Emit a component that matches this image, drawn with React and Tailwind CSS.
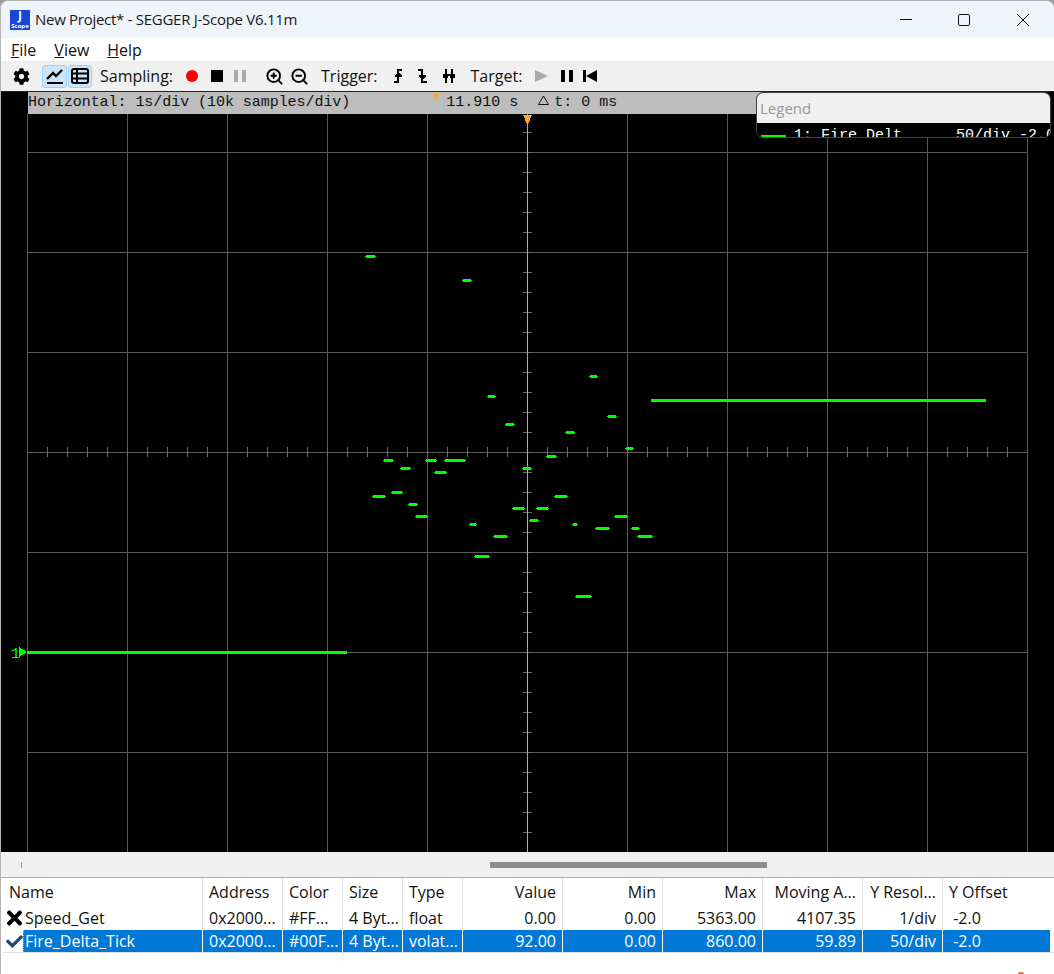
import React from 'react';
import { ZoomIn, ZoomOut } from 'lucide-react';
import { FaCog, FaTimes, FaCheck } from 'react-icons/fa';

const uiFont = "font-['Open_Sans','Noto_Sans',sans-serif]";
const monoFont = "font-['Liberation_Mono',monospace]";

const scatter = [
  [366, 375, 256], [463, 471, 280], [590, 597, 376], [488, 495, 396], [608, 616, 416],
  [506, 514, 424], [566, 574, 432], [626, 633, 448], [547, 556, 456], [384, 393, 460],
  [426, 436, 460], [445, 465, 460], [401, 410, 468], [523, 531, 468], [435, 446, 472],
  [373, 385, 496], [392, 402, 492], [555, 567, 496], [409, 417, 504], [513, 524, 508],
  [537, 548, 508], [416, 427, 516], [615, 627, 516], [470, 476, 524], [573, 577, 524],
  [530, 538, 520], [596, 609, 528], [632, 639, 528], [494, 507, 536], [638, 652, 536],
  [475, 489, 556], [576, 591, 596],
];

const columns = [
  { name: 'Name' },
  { name: 'Address' },
  { name: 'Color' },
  { name: 'Size' },
  { name: 'Type' },
  { name: 'Value', right: true },
  { name: 'Min', right: true },
  { name: 'Max', right: true },
  { name: 'Moving A...', right: true },
  { name: 'Y Resol...', right: true },
  { name: 'Y Offset' },
];

const rows = [
  { icon: 'x', cells: ['Speed_Get', '0x2000...', '#FF...', '4 Byt...', 'float', '0.00', '0.00', '5363.00', '4107.35', '1/div', ' -2.0'] },
  { icon: 'check', selected: true, cells: ['Fire_Delta_Tick', '0x2000...', '#00F...', '4 Byt...', 'volat...', '92.00', '0.00', '860.00', '59.89', '50/div', ' -2.0'] },
];

const gridCols = 'grid grid-cols-[200px_80px_60px_60px_60px_100px_100px_100px_100px_80px_107px]';

const Chart = () => {
  const hLines = [152, 252, 352, 452, 552, 652, 752];
  const vLines = [27, 127, 227, 327, 427, 627, 727, 827, 927, 1027];
  const xTicks = [];
  for (let x = 47; x <= 1007; x += 20) xTicks.push(x);
  const yTicks = [];
  for (let y = 132; y <= 832; y += 20) yTicks.push(y);

  return (
    <svg width="1053" height="738" viewBox="1 114 1053 738" className="block" shapeRendering="crispEdges">
      {hLines.map((y) => <rect key={y} x="27" y={y} width="1001" height="1" fill="#5a5a5a" />)}
      {vLines.map((x) => <rect key={x} x={x} y="114" width="1" height="738" fill="#5a5a5a" />)}
      {xTicks.map((x) => <rect key={x} x={x} y="447" width="1" height="10" fill="#6a6a6a" />)}
      {yTicks.map((y) => <rect key={y} x="523" y={y} width="9" height="1" fill="#6a6a6a" />)}
      <rect x="527" y="114" width="1" height="738" fill="#f0a41f" />
      <polygon points="523,115 532,115 528,124 527,124" fill="#ffa81f" />
      {scatter.map(([a, b, y], i) => (
        <g key={i}>
          <rect x={a} y={y - 1} width={b - a} height="3" fill="#00ff00" />
          <rect x={a - 1} y={y} width={b - a + 2} height="1" fill="#00ff00" />
        </g>
      ))}
      <rect x="651" y="399" width="335" height="3" fill="#00ff00" />
      <rect x="27" y="651" width="320" height="3" fill="#00ff00" />
      <polygon points="19,647 27,652 19,657" fill="#00ff00" />
      <text x="11" y="658" fill="#00ff00" fontSize="15" fontFamily="'Liberation Mono', monospace">1</text>
    </svg>
  );
};

const ChartIcon = () => (
  <svg width="18" height="16" viewBox="0 0 18 16">
    <path d="M1 15h16" stroke="#000" strokeWidth="2" />
    <path d="M1 11 L7 5 L10 8 L16 2" stroke="#000" strokeWidth="2.4" fill="none" />
  </svg>
);

const TableIcon = () => (
  <svg width="18" height="16" viewBox="0 0 18 16">
    <rect x="1" y="1" width="16" height="14" rx="2" fill="none" stroke="#000" strokeWidth="2" />
    <path d="M1 5.5h16M1 10.5h16M6 1v14" stroke="#000" strokeWidth="2" />
  </svg>
);

const TriggerIcon = ({ kind }) => (
  <svg width="14" height="16" viewBox="0 0 14 16" shapeRendering="crispEdges">
    {kind === 'rise' && <path d="M2 14h4V2h4M3 8h7M4 7h5M5 6h3" stroke="#000" strokeWidth="2" fill="none" />}
    {kind === 'fall' && <path d="M2 2h4v12h5M3 8h7M4 9h5M5 10h3" stroke="#000" strokeWidth="2" fill="none" />}
    {kind === 'both' && <path d="M4 1v14M10 1v14M1 7h12M1 9h5M8 9h5" stroke="#000" strokeWidth="2" fill="none" />}
  </svg>
);

const App = () => {
  return (
    <div className={`w-[1054px] h-[974px] bg-[#9a9a9a] overflow-hidden ${uiFont}`}>
      <div className="h-full flex flex-col relative bg-white rounded-t-[8px] border-l border-t border-[#b4b4b4]">
        {/* Title bar */}
        <div className="h-[37px] shrink-0 bg-[#eff3fa] flex items-center rounded-t-[8px]">
          <div className="ml-[9px] w-[20px] h-[20px] bg-[#1746d8] flex flex-col items-center text-white leading-none">
            <span className="text-[12px] font-bold h-[13px]">J</span>
            <span className="text-[6px] font-bold">Scope</span>
          </div>
          <span className="ml-[5px] text-[15px] text-[#1a1a1a] tracking-[-0.28px]">New Project* - SEGGER J-Scope V6.11m</span>
          <div className="ml-auto flex items-center text-black">
            <svg width="14" height="14" viewBox="0 0 14 14" className="mr-[44px]"><path d="M1 6.5h12" stroke="#111" /></svg>
            <svg width="14" height="14" viewBox="0 0 14 14" className="mr-[45px]"><rect x="1.5" y="1.5" width="11" height="11" rx="1.5" fill="none" stroke="#111" /></svg>
            <svg width="14" height="14" viewBox="0 0 14 14" className="mr-[24px]"><path d="M1 1l12 12M13 1L1 13" stroke="#111" /></svg>
          </div>
        </div>

        {/* Menu */}
        <div className="h-[23px] shrink-0 bg-white flex items-center pl-[10px] gap-[18px] text-[16px] text-[#111]">
          <span><u>F</u>ile</span>
          <span><u>V</u>iew</span>
          <span><u>H</u>elp</span>
        </div>

        {/* Toolbar */}
        <div className="h-[31px] shrink-0 bg-[#f0f0f0] flex items-center text-[16px] text-[#111] border-b border-[#222]">
          <FaCog size={17} className="ml-[12px] text-black" />
          <div className="ml-[12px] w-[25px] h-[23px] bg-[#cce4f7] border border-[#99d1ff] rounded-[3px] flex items-center justify-center"><ChartIcon /></div>
          <div className="ml-[1px] w-[24px] h-[23px] bg-[#cce4f7] border border-[#99d1ff] rounded-[3px] flex items-center justify-center"><TableIcon /></div>
          <span className="ml-[8px]">Sampling:</span>
          <span className="ml-[13px] w-[12px] h-[12px] rounded-full bg-[#ff0000]" />
          <span className="ml-[13px] w-[12px] h-[12px] bg-black" />
          <span className="ml-[11px] w-[12px] h-[12px] flex justify-between">
            <span className="w-[4px] bg-[#aaaaaa]" />
            <span className="w-[4px] bg-[#aaaaaa]" />
          </span>
          <ZoomIn size={19} strokeWidth={2.4} className="ml-[19px] text-black" />
          <ZoomOut size={19} strokeWidth={2.4} className="ml-[6px] text-black" />
          <span className="ml-[12px]">Trigger:</span>
          <span className="ml-[14px]"><TriggerIcon kind="rise" /></span>
          <span className="ml-[10px]"><TriggerIcon kind="fall" /></span>
          <span className="ml-[12px]"><TriggerIcon kind="both" /></span>
          <span className="ml-[15px]">Target:</span>
          <svg width="13" height="12" viewBox="0 0 13 12" className="ml-[13px]"><polygon points="0,0 13,6 0,12" fill="#aaaaaa" /></svg>
          <span className="ml-[13px] w-[12px] h-[12px] flex justify-between">
            <span className="w-[4px] bg-black" />
            <span className="w-[4px] bg-black" />
          </span>
          <svg width="14" height="12" viewBox="0 0 14 12" className="ml-[10px]"><path d="M0 0h3v12H0zM14 0v12L3 6z" fill="#000" /></svg>
        </div>

        {/* Scope */}
        <div className="h-[760px] shrink-0 bg-black relative">
          <div className={`h-[22px] ml-[27px] mr-[26px] bg-[#bdbdbd] flex items-center text-[15px] text-[#111] ${monoFont}`}>
            <span className="tracking-[-0.05px]">Horizontal: 1s/div (10k samples/div)</span>
            <span className="ml-[96px]">11.910 s</span>
            <svg width="11" height="10" viewBox="0 0 11 10" className="ml-[20px] mb-[6px]"><path d="M5.5 1 L10.5 9.5 H0.5 Z" fill="none" stroke="#111" /></svg>
            <span className="ml-[5px]">t: 0 ms</span>
          </div>
          <span className="absolute left-[432px] top-[2px] w-0 h-0 border-l-[3px] border-r-[3px] border-t-[7px] border-l-transparent border-r-transparent border-t-[#ffa81f]" />
          <Chart />

          {/* Legend */}
          <div className="absolute left-[755px] top-0 w-[295px] h-[46px] rounded-[7px] border border-[#444] overflow-hidden bg-black">
            <div className="h-[30px] bg-[#f0f0f0] flex items-center pl-[3px] text-[15px] text-[#999]">Legend</div>
            <div className={`flex items-center h-[27px] text-white text-[15px] whitespace-nowrap ${monoFont}`}>
              <span className="ml-[4px] w-[25px] h-[3px] shrink-0 bg-[#00ff00]" />
              <span className="ml-[8px]">1: Fire_Delt</span>
              <span className="ml-[54px]">50/div -2.0</span>
            </div>
          </div>
        </div>

        {/* Scrollbar strip */}
        <div className="h-[26px] shrink-0 bg-[#f0f0f0] flex items-center border-b border-[#b0b0b0]">
          <span className="ml-[20px] w-px h-[6px] bg-[#999]" />
          <span className="ml-[468px] w-[277px] h-[6px] bg-[#8c8c8c]" />
        </div>

        {/* Variable table */}
        <div className="flex-1 bg-white pl-[2px] text-[16px] text-[#111]">
          <div className={`${gridCols} h-[28px]`}>
            {columns.map((c, i) => (
              <div key={c.name} className={`flex items-center px-[6px] whitespace-nowrap ${c.right ? 'justify-end' : ''} ${i < columns.length - 1 ? 'border-r border-[#e5e5e5]' : ''}`}>
                {c.name}
              </div>
            ))}
          </div>
          {rows.map((r) => (
            <div key={r.cells[0]} className={`${gridCols} ${r.selected ? 'h-[23px] border-b border-[#e0e0e0]' : 'h-[24px]'}`}>
              {r.cells.map((cell, i) => (
                <div
                  key={i}
                  className={`flex items-center whitespace-pre overflow-hidden ${i === 0 ? '' : 'px-[6px]'} ${columns[i].right ? 'justify-end' : ''} ${i < r.cells.length - 1 ? 'border-r' : ''} ${r.selected ? 'border-white' : 'border-[#e5e5e5]'} ${r.selected && i > 0 ? 'bg-[#0078d7] text-white' : ''}`}
                >
                  {i === 0 ? (
                    <>
                      <span className="w-[20px] flex justify-center shrink-0 pl-[3px]">
                        {r.icon === 'x' ? <FaTimes size={22} className="text-black" /> : <FaCheck size={17} className="text-[#1c4a78]" />}
                      </span>
                      <span className={`h-full flex-1 flex items-center ${r.selected ? 'pl-[1px] bg-[#0078d7] text-white border-l border-dotted border-[#f0a030]' : 'pl-[2px]'}`}>{cell}</span>
                    </>
                  ) : cell}
                </div>
              ))}
            </div>
          ))}
        </div>
        <span className="absolute left-[1017px] bottom-0 w-[6px] h-[2px] rounded-t-full bg-[#e8704a]" />
      </div>
    </div>
  );
};

export default App;
